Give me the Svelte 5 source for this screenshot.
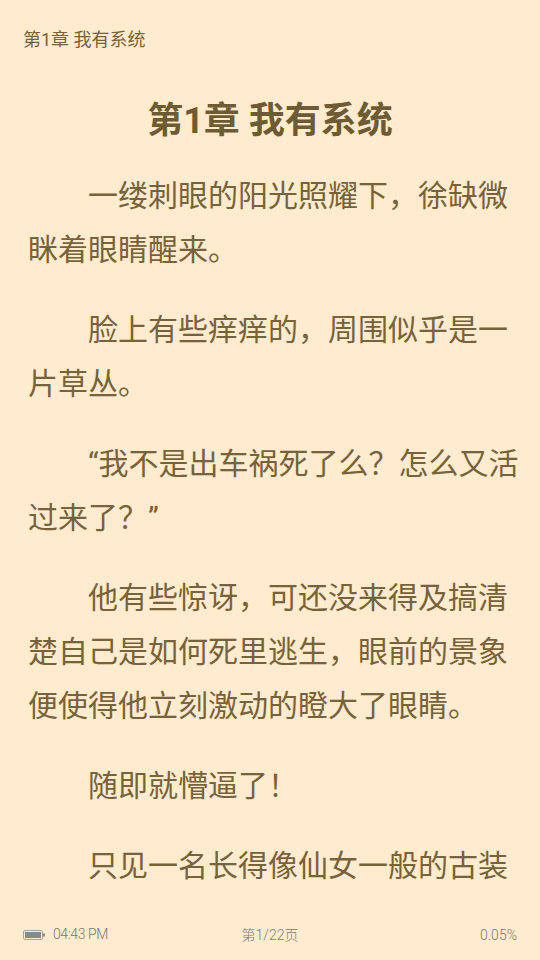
<script lang="ts">
  const title = '第1章 我有系统';
  const paragraphs = [
    '一缕刺眼的阳光照耀下，徐缺微眯着眼睛醒来。',
    '脸上有些痒痒的，周围似乎是一片草丛。',
    '“我不是出车祸死了么？怎么又活过来了？”',
    '他有些惊讶，可还没来得及搞清楚自己是如何死里逃生，眼前的景象便使得他立刻激动的瞪大了眼睛。',
    '随即就懵逼了！',
    '只见一名长得像仙女一般的古装'
  ];
</script>

<div class="reader">
  <div class="top">{title}</div>
  <div class="page">
    <h1>{title}</h1>
    {#each paragraphs as p}
      <p>{p}</p>
    {/each}
  </div>
  <div class="bottom">
    <div class="left">
      <svg width="22" height="10" viewBox="0 0 22 10">
        <rect x="0.5" y="0.5" width="19" height="9" rx="1.5" fill="none" stroke="#a9a598" />
        <rect x="2" y="2" width="16" height="6" fill="#8a8a8a" />
        <rect x="20" y="3.5" width="2" height="3" fill="#8a8a8a" />
      </svg>
      <span class="time">04:43 PM</span>
    </div>
    <span class="pages">第1/22页</span>
    <span class="percent">0.05%</span>
  </div>
</div>

<style>
  :global(body) {
    margin: 0;
    background: #ffebcd;
  }

  .reader {
    width: 540px;
    height: 960px;
    display: flex;
    flex-direction: column;
    overflow: hidden;
    background: #ffebcd;
    font-family: Roboto, "Noto Sans CJK SC", sans-serif;
  }

  .top {
    padding: 27px 23px 0;
    font-size: 18px;
    line-height: 25px;
    color: #77623a;
  }

  .page {
    flex: 1;
    overflow: hidden;
    padding: 0 20px;
  }

  h1 {
    margin: 44px 0 23px;
    font-size: 36px;
    line-height: 50px;
    font-weight: 700;
    text-align: center;
    color: #6e5a33;
  }

  p {
    margin: 0 0 26px;
    padding-left: 8px;
    font-size: 30px;
    line-height: 54px;
    text-indent: 60px;
    color: #77623a;
  }

  .bottom {
    display: grid;
    grid-template-columns: 1fr auto 1fr;
    align-items: center;
    padding: 0 23px 15px;
    font-size: 14px;
    line-height: 20px;
    color: #8a8a8a;
  }

  .left {
    display: flex;
    align-items: center;
    gap: 8px;
  }

  .time {
    margin-top: -2px;
    font-weight: 300;
    letter-spacing: -0.4px;
    color: #787878;
  }

  .pages {
    font-weight: 300;
    color: #7c7c7c;
  }

  .percent {
    justify-self: end;
    font-weight: 300;
    color: #787878;
  }
</style>
